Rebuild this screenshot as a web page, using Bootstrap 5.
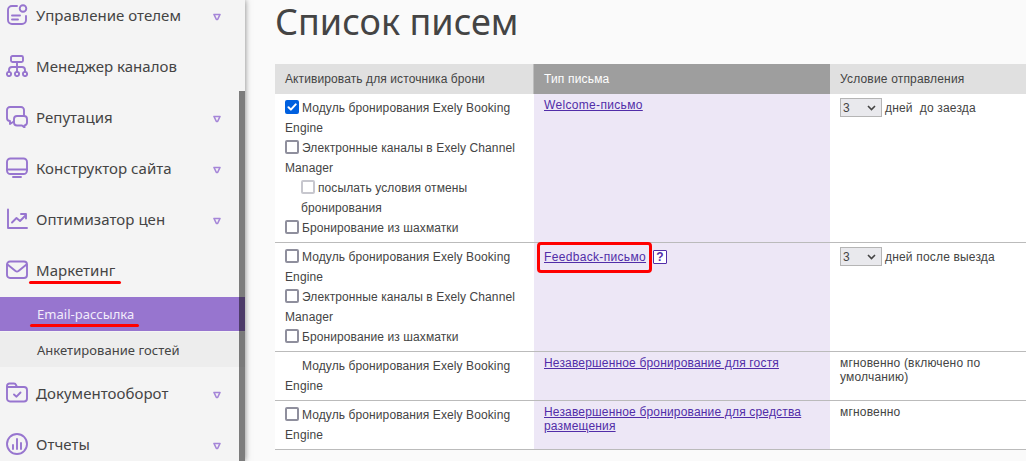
<!DOCTYPE html>
<html lang="ru">
<head>
<meta charset="utf-8">
<title>Список писем</title>
<link href="https://cdn.jsdelivr.net/npm/bootstrap@5.3.0/dist/css/bootstrap.min.css" rel="stylesheet">
<style>
body{background:#fafafa;color:#444;font-family:"Liberation Sans",Arial,sans-serif;font-size:12px;height:461px;overflow:hidden}
.side{width:245px;height:461px;background:#f4f4f4;box-shadow:0 0 6px rgba(0,0,0,.5);font-family:"Noto Sans","Open Sans",sans-serif;font-size:15px;letter-spacing:.04px;color:#444;z-index:2}
.side-clip{height:461px;overflow:hidden}
.side-list{margin-top:-11px}
.side-item{height:51px;padding:0 24px 0 6px;line-height:20px}
.side-item .ico{width:22px;height:22px;margin-right:8px;fill:none;stroke:#9775cf;stroke-width:1.9;stroke-linecap:round;stroke-linejoin:round;flex:none}
.side-item .tri{width:8px;height:8px;margin-top:4px;fill:none;stroke:#a585d8;stroke-width:1.6;stroke-linejoin:round}
.sub-item{height:35px;padding-left:37px;background:#ededed;font-size:13px;line-height:20px}
.sub-item.current{height:34px;background:#9775cf;color:#f2ecfb;margin-top:2px;margin-bottom:1px}
.redline{height:3px;border-radius:2px;background:#f00}
.thumb{left:239px;top:91px;width:6px;height:370px;background:rgba(0,0,0,.49)}
.page-title{font-family:"Noto Sans","Open Sans",sans-serif;font-size:36px;line-height:44px;font-weight:400;color:#444;margin:0 0 20px}
.content{padding-left:30px}
.grid-row{display:grid;grid-template-columns:259px 296px 1fr;border-bottom:1px solid #bbb;background:#fff}
.grid-row>div{padding:4px 10px}
.grid-row>.kind{background:#ede7f6;line-height:14px;letter-spacing:.17px}
.grid-row>.cond{line-height:14px;letter-spacing:.18px}
.src{line-height:20px;letter-spacing:.1px}
.grid-head{border:0;background:#e0e0e0;height:30px;line-height:22px;letter-spacing:.1px}
.grid-head>.kind{background:#9e9e9e;color:#fff;line-height:22px;box-shadow:-1px 0 0 #bdbdbd}
.grid-head>.cond{line-height:22px}
.cb{display:inline-block;width:14px;height:14px;border:2px solid #8f8f9d;border-radius:2px;background:#fff;vertical-align:-2px;margin-right:3px}
.cb.off{border-color:#c7c7ce}
.cb.none{visibility:hidden}
.cb.on{background:#0060df;border-color:#0060df}
.cb svg{display:block;width:10px;height:10px;fill:none;stroke:#fff;stroke-width:2;stroke-linecap:round;stroke-linejoin:round}
.kind a{color:#512da8;text-decoration:underline;text-underline-offset:1px}
.kind a.wide{letter-spacing:.33px}
.sel{width:42px;height:19px;border:1px solid #b5b5b5;background:#e9e9ed;padding:0 5px 0 2px;margin-right:3px}
.sel svg{width:9px;height:6px;fill:none;stroke:#444;stroke-width:1.6}
.frame{left:-7px;top:-5px;width:115px;height:31px;border:3px solid #f00;border-radius:4px}
.help{width:14px;height:14px;border:1px solid #512da8;border-radius:1px;background:#fff;color:#512da8;font-weight:700;font-size:12px;line-height:12px;margin-left:7px;text-align:center}
.t{white-space:pre}
</style>
</head>
<body>
<div class="d-flex">
<aside class="side position-relative flex-shrink-0">
<div class="side-clip"><div class="side-list">
 <div class="side-item d-flex align-items-center"><svg class="ico" viewBox="0 0 22 22"><path d="M11 2H6a4 4 0 0 0-4 4v10a4 4 0 0 0 4 4h10a4 4 0 0 0 4-4v-4M6 11.500h8M6 15.500h6"/><circle cx="17" cy="4.500" r="3.300"/></svg><span>Управление отелем</span><svg class="tri ms-auto" viewBox="0 0 8 8"><path d="M1 1.500h6L4.600 6.500H3.400z"/></svg></div>
 <div class="side-item d-flex align-items-center"><svg class="ico" viewBox="0 0 22 22"><rect x="5" y="1" width="12" height="6" rx="1.500"/><path d="M11 7v10M3 17v-2q0-3 3-3h10q3 0 3 3v2"/><circle cx="3" cy="19" r="2.100"/><circle cx="11" cy="19" r="2.100"/><circle cx="19" cy="19" r="2.100"/></svg><span>Менеджер каналов</span></div>
 <div class="side-item d-flex align-items-center"><svg class="ico" viewBox="0 0 22 22"><path d="M18 9V4a3 3 0 0 0-3-3H4a3 3 0 0 0-3 3v8a3 3 0 0 0 3 3v3l3-2"/><path d="M11 10h7a3 3 0 0 1 3 3v3.500a3 3 0 0 1-2.500 3v2L16 19.500h-5a3 3 0 0 1-3-3V13a3 3 0 0 1 3-3z"/></svg><span>Репутация</span><svg class="tri ms-auto" viewBox="0 0 8 8"><path d="M1 1.500h6L4.600 6.500H3.400z"/></svg></div>
 <div class="side-item d-flex align-items-center"><svg class="ico" viewBox="0 0 22 22"><rect x="1" y="1.500" width="20" height="15.500" rx="3.500"/><path d="M1 12.500h20M7 20h8"/></svg><span>Конструктор сайта</span><svg class="tri ms-auto" viewBox="0 0 8 8"><path d="M1 1.500h6L4.600 6.500H3.400z"/></svg></div>
 <div class="side-item d-flex align-items-center"><svg class="ico" viewBox="0 0 22 22"><path d="M2 1.500V20h19M6 14.500l4.500-4.500 3.500 3 6-6M15 6h5v4.500"/></svg><span>Оптимизатор цен</span><svg class="tri ms-auto" viewBox="0 0 8 8"><path d="M1 1.500h6L4.600 6.500H3.400z"/></svg></div>
 <div class="side-item d-flex align-items-center position-relative"><svg class="ico" viewBox="0 0 22 22"><rect x="1" y="2.500" width="20" height="16.500" rx="3"/><path d="M1.500 5.500l8 6.500q1.500 1 3 0l8-6.500"/></svg><span>Маркетинг</span><i class="redline position-absolute" style="left:29px;top:37px;width:92px"></i></div>
 <div class="sub-item current d-flex align-items-center position-relative"><span>Email-рассылка</span><i class="redline position-absolute" style="left:30px;top:27px;width:109px"></i></div>
 <div class="sub-item d-flex align-items-center"><span>Анкетирование гостей</span></div>
 <div class="side-item d-flex align-items-center"><svg class="ico" viewBox="0 0 22 22"><path d="M1 5V4a2.500 2.500 0 0 1 2.500-2.500H8q1.500 0 2 1.500l1 2H18a3 3 0 0 1 3 3v8.500a3 3 0 0 1-3 3H4a3 3 0 0 1-3-3V5h10M8 12.500l2.500 2.200 4-4.200"/></svg><span>Документооборот</span><svg class="tri ms-auto" viewBox="0 0 8 8"><path d="M1 1.500h6L4.600 6.500H3.400z"/></svg></div>
 <div class="side-item d-flex align-items-center"><svg class="ico" viewBox="0 0 22 22"><circle cx="11" cy="11" r="10"/><path d="M7 12v4M11 6v10M15 10v6"/></svg><span>Отчеты</span><svg class="tri ms-auto" viewBox="0 0 8 8"><path d="M1 1.500h6L4.600 6.500H3.400z"/></svg></div>
</div></div>
<div class="thumb position-absolute"></div>
</aside>
<main class="content flex-grow-1">
<h1 class="page-title"><span>Список писем</span></h1>
<div class="grid-row grid-head"><div>Активировать для источника брони</div><div class="kind">Тип письма</div><div class="cond">Условие отправления</div></div>
<div class="grid-row">
 <div class="src"><div><span class="cb on"><svg viewBox="0 0 10 10"><path d="M1.500 5.200l2.400 2.400 4.800-5.200"/></svg></span>Модуль бронирования Exely Booking<br>Engine</div><div><span class="cb"></span>Электронные каналы в Exely Channel<br>Manager</div><div class="ms-3"><span class="cb off"></span>посылать условия отмены<br>бронирования</div><div><span class="cb"></span>Бронирование из шахматки</div></div>
 <div class="kind"><a class="wide" href="#">Welcome-письмо</a></div>
 <div class="cond"><div class="d-flex align-items-center"><span class="sel d-flex align-items-center justify-content-between">3<svg viewBox="0 0 9 6"><path d="M1 1l3.500 3.500L8 1"/></svg></span><span class="t">дней  до заезда</span></div></div>
</div>
<div class="grid-row">
 <div class="src"><div><span class="cb"></span>Модуль бронирования Exely Booking<br>Engine</div><div><span class="cb"></span>Электронные каналы в Exely Channel<br>Manager</div><div><span class="cb"></span>Бронирование из шахматки</div></div>
 <div class="kind"><div class="d-flex align-items-center position-relative" style="height:20px"><a class="wide" href="#">Feedback-письмо</a><span class="help">?</span><i class="frame position-absolute"></i></div></div>
 <div class="cond"><div class="d-flex align-items-center"><span class="sel d-flex align-items-center justify-content-between">3<svg viewBox="0 0 9 6"><path d="M1 1l3.500 3.500L8 1"/></svg></span><span class="t">дней после выезда</span></div></div>
</div>
<div class="grid-row">
 <div class="src"><span class="cb none"></span>Модуль бронирования Exely Booking<br>Engine</div>
 <div class="kind"><a href="#">Незавершенное бронирование для гостя</a></div>
 <div class="cond">мгновенно (включено по<br>умолчанию)</div>
</div>
<div class="grid-row">
 <div class="src"><span class="cb"></span>Модуль бронирования Exely Booking<br>Engine</div>
 <div class="kind"><a href="#">Незавершенное бронирование для средства<br>размещения</a></div>
 <div class="cond">мгновенно</div>
</div>
</main>
</div>
<script src="https://cdn.jsdelivr.net/npm/bootstrap@5.3.0/dist/js/bootstrap.bundle.min.js"></script>
</body>
</html>
